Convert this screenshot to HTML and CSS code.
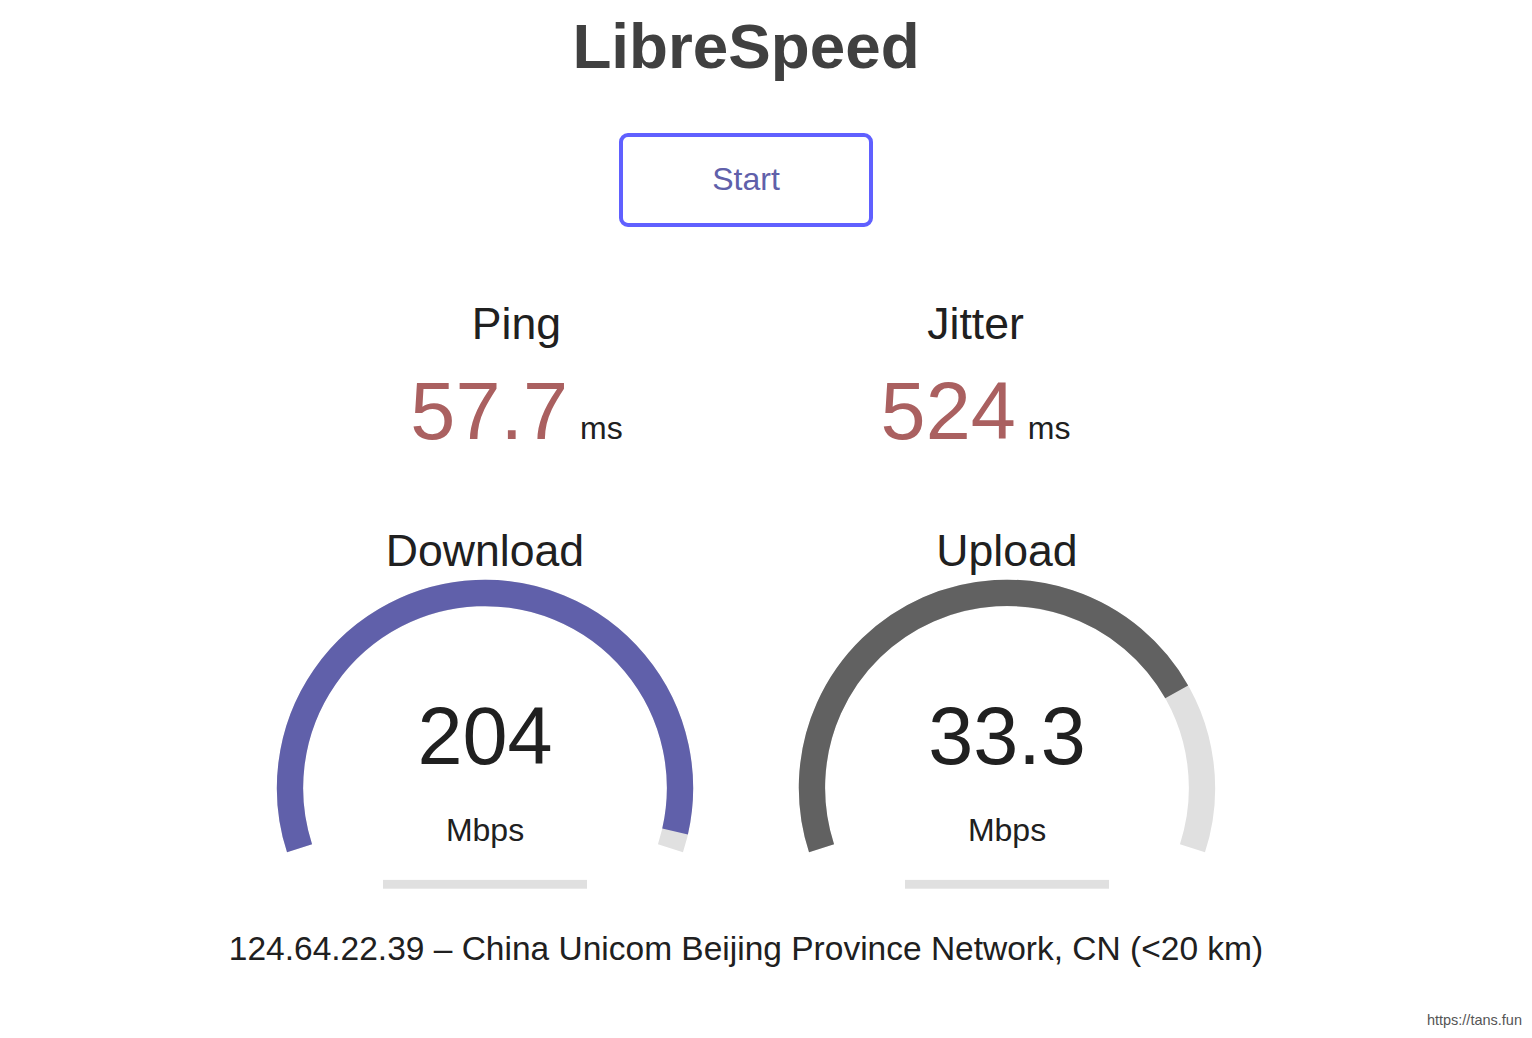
FILE: index.html
```
<!DOCTYPE html>
<html lang="en">
<head>
    <meta charset="UTF-8">
    <meta name="viewport" content="width=device-width, initial-scale=1.0">
    <title>LibreSpeed</title>
    <link rel="stylesheet" href="styles.css">
</head>
<body>
    <main id="testWrapper">
        <h1>LibreSpeed</h1>
        <div id="startStopBtn">Start</div>

        <div class="testGroup pingGroup">
            <div class="testArea2">
                <div class="testName">Ping</div>
                <div class="valueRow">
                    <div id="pingText" class="meterText">57.7</div>
                    <div class="unit">ms</div>
                </div>
            </div>
            <div class="testArea2">
                <div class="testName">Jitter</div>
                <div class="valueRow">
                    <div id="jitText" class="meterText">524</div>
                    <div class="unit">ms</div>
                </div>
            </div>
        </div>

        <div class="testGroup meterGroup">
            <div class="testArea">
                <!-- arc runs from -1.1pi to 0.1pi, like the canvas meter -->
                <svg class="meter" viewBox="0 0 510 398" width="510" height="398">
                    <path d="M69.54 331.26 A195 195 0 1 1 440.46 331.26" fill="none" stroke="#E0E0E0" stroke-width="26.3"/>
                    <path d="M69.54 331.26 A195 195 0 1 1 445.08 314.53" fill="none" stroke="#6060AA" stroke-width="26.3"/>
                    <rect x="153" y="362.9" width="204" height="8.8" fill="#E0E0E0"/>
                </svg>
                <div class="meterLabels">
                    <div class="testName">Download</div>
                    <div id="dlText" class="meterText">204</div>
                    <div class="unit">Mbps</div>
                </div>
            </div>
            <div class="testArea">
                <svg class="meter" viewBox="0 0 510 398" width="510" height="398">
                    <path d="M69.54 331.26 A195 195 0 1 1 440.46 331.26" fill="none" stroke="#E0E0E0" stroke-width="26.3"/>
                    <path d="M69.54 331.26 A195 195 0 0 1 424.70 174.88" fill="none" stroke="#616161" stroke-width="26.3"/>
                    <rect x="153" y="362.9" width="204" height="8.8" fill="#E0E0E0"/>
                </svg>
                <div class="meterLabels">
                    <div class="testName">Upload</div>
                    <div id="ulText" class="meterText">33.3</div>
                    <div class="unit">Mbps</div>
                </div>
            </div>
        </div>

        <div id="ipArea">
            <span id="ip">124.64.22.39 – China Unicom Beijing Province Network, CN (&lt;20 km)</span>
        </div>
    </main>

    <footer class="siteLink">https://tans.fun</footer>
</body>
</html>
```

FILE: styles.css
```
body {
    font-family: 'Liberation Sans', Arial, sans-serif;
    color: #202020;
    background: #fff;
    margin: 0;
    min-height: 100vh;
    display: flex;
    flex-direction: column;
}

#testWrapper {
    width: calc(100% - 40px);
    display: flex;
    flex-direction: column;
    align-items: center;
    text-align: center;
}

h1 {
    color: #404040;
    font-size: 63.75px;
    font-weight: bold;
    line-height: 74px;
    margin: 9px 0 0;
}

#startStopBtn {
    box-sizing: border-box;
    width: 254px;
    height: 94px;
    margin-top: 50px;
    border: 4.5px solid #6060FF;
    border-radius: 9px;
    color: #6060AA;
    font-size: 32px;
    line-height: 84px;
    cursor: pointer;
}

.testGroup {
    display: flex;
    justify-content: center;
}

.pingGroup {
    gap: 13px;
    margin-top: 75px;
}

.testArea2 {
    width: 446px;
}

.testName {
    font-size: 44.6px;
    line-height: 1;
}

.meterText {
    font-size: 81px;
    line-height: 1;
}

.unit {
    font-size: 32px;
    line-height: 1;
}

.valueRow {
    display: flex;
    justify-content: center;
    align-items: baseline;
    gap: 12px;
    margin-top: 24.5px;
}

.valueRow .meterText {
    color: #AA6060;
}

.meterGroup {
    gap: 12px;
    margin-top: 65px;
}

.testArea {
    display: grid;
    width: 510px;
    height: 398px;
}

.meter,
.meterLabels {
    grid-area: 1 / 1;
}

.meterLabels {
    display: flex;
    flex-direction: column;
    align-items: center;
}

.meterLabels .testName {
    margin-top: 12px;
}

.meterLabels .meterText {
    margin-top: 122.5px;
}

.meterLabels .unit {
    margin-top: 36.5px;
}

#ipArea {
    font-size: 33.5px;
    line-height: 1;
    margin-top: 16.7px;
}

.siteLink {
    margin-top: auto;
    text-align: right;
    font-size: 14.5px;
    line-height: 1;
    color: #555;
    padding: 0 10px 11px;
}
```
